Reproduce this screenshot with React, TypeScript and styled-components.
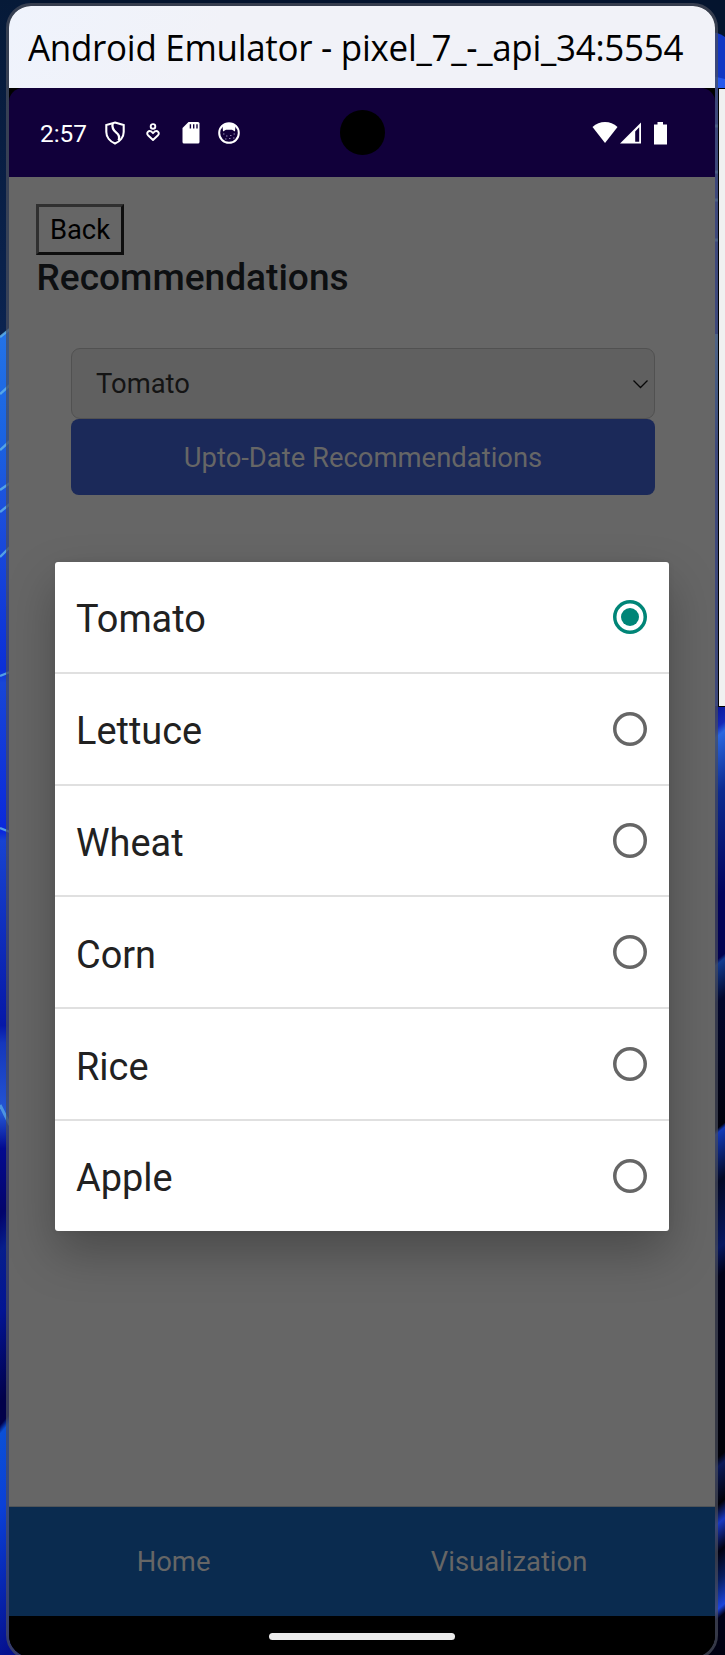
import React from "react";
import styled, { createGlobalStyle } from "styled-components";

const GlobalStyle = createGlobalStyle`
  *, *::before, *::after { box-sizing: border-box; }
  html, body { margin: 0; padding: 0; overflow: hidden; }
  body { font-family: Roboto, "Liberation Sans", sans-serif; }
`;

const Desktop = styled.div`
  position: relative;
  width: 725px;
  height: 1655px;
  overflow: hidden;
  padding: 3px 7px 0 6px;
  background: #04142e;
`;

const Wallpaper = styled.svg`
  position: absolute;
  inset: 0;
  width: 725px;
  height: 1655px;
`;

const BackWindow = styled.div`
  position: absolute;
  top: 88px;
  left: 718px;
  width: 20px;
  height: 619px;
  border: 1px solid #000;
  background: #f0f0f0;
`;

const Frame = styled.div`
  position: relative;
  width: 712px;
  height: 1657px;
  border: 3px solid rgba(74, 78, 92, 0.72);
  border-radius: 25px;
`;

const Screen = styled.div`
  display: flex;
  flex-direction: column;
  width: 706px;
  height: 1651px;
  overflow: hidden;
  border-radius: 22px;
  background: #000;
`;

const TitleBar = styled.header`
  display: flex;
  align-items: center;
  flex: 0 0 82px;
  padding: 0 0 0 19px;
  background: linear-gradient(115deg, #eff3fc 0%, #f1f2f8 30%, #f1f2f8 100%);
`;

const Title = styled.h1`
  margin: 0;
  color: #000;
  font: 400 36.5px/50px "Open Sans", "Noto Sans", sans-serif;
  white-space: nowrap;
  transform: scaleX(0.957);
  transform-origin: left center;
  letter-spacing: -0.28px;
`;

const StatusBar = styled.div`
  position: relative;
  display: flex;
  align-items: center;
  justify-content: space-between;
  flex: 0 0 89px;
  padding: 0 47px 0 31px;
  border-radius: 14px 14px 0 0;
  background: #11003a;
  color: #fff;
`;

const Clock = styled.span`
  width: 60px;
  font-size: 24.4px;
  line-height: 30px;
  padding-top: 2px;
`;

const StatusGroup = styled.div`
  display: flex;
  align-items: center;
`;

const Camera = styled.div`
  position: absolute;
  top: 22px;
  left: 331px;
  width: 44.5px;
  height: 44.5px;
  border-radius: 50%;
  background: #000;
`;

const Page = styled.main`
  display: flex;
  flex-direction: column;
  align-items: flex-start;
  flex: 0 0 1330px;
  padding: 27px 27px 0;
  border-bottom: 1px solid #505458;
  background: #666;
`;

const BackButton = styled.button`
  width: 88px;
  height: 51px;
  padding: 0;
  border: 3px solid;
  border-color: #303030 #0e0e0e #0e0e0e #303030;
  background: #666;
  color: #000;
  font: 400 27.4px/40px Roboto, sans-serif;
`;

const Heading = styled.h2`
  margin: 0;
  padding-left: 0.5px;
  color: #0d0f11;
  font-size: 37.1px;
  font-weight: 500;
  line-height: 45px;
`;

const Form = styled.div`
  display: flex;
  flex-direction: column;
  width: 584px;
  margin: 48px 0 0 35px;
`;

const SelectBox = styled.div`
  display: flex;
  align-items: center;
  justify-content: space-between;
  height: 71px;
  padding: 0 5px 0 24px;
  border: 1px solid #515151;
  border-radius: 9px;
  background: #606060;
  color: #141414;
  font-size: 27.4px;
`;

const SubmitButton = styled.button`
  height: 76px;
  padding: 1px 0 0;
  border: 0;
  border-radius: 8px;
  background: #1b2959;
  color: #666;
  font: 400 27.43px/40px Roboto, sans-serif;
`;

const Dialog = styled.div`
  position: absolute;
  top: 556px;
  left: 46px;
  width: 614px;
  border-radius: 3px;
  background: #fff;
  box-shadow: 0 22px 48px rgba(0, 0, 0, 0.27), 0 0 6px rgba(0, 0, 0, 0.06);
`;

const Option = styled.div`
  display: flex;
  align-items: center;
  justify-content: space-between;
  height: 111.8px;
  padding: 0 22px 0 21px;
  border-bottom: 2px solid #e0e0e0;
  color: #212121;
  font-size: 37.9px;
  &:last-child { height: 109.8px; border-bottom: 0; }
`;

const Radio = styled.span<{ $checked?: boolean }>`
  display: flex;
  align-items: center;
  justify-content: center;
  width: 34.4px;
  height: 34.4px;
  box-shadow: inset 0 0 0 3.5px ${(p) => (p.$checked ? "#008577" : "#666")};
  border-radius: 50%;
  &::after {
    content: "";
    width: 18px;
    height: 18px;
    border-radius: 50%;
    background: ${(p) => (p.$checked ? "#008577" : "transparent")};
  }
`;

const OptionLabel = styled.span`
  padding-top: 5px;
`;

const NavBar = styled.nav`
  display: flex;
  align-items: center;
  justify-content: space-around;
  flex: 0 0 109px;
  padding: 0 17.5px;
  background: #0a2b4f;
  color: #666;
  font-size: 27.4px;
`;

const GestureArea = styled.div`
  display: flex;
  justify-content: center;
  flex: 1;
  padding-top: 17px;
  background: #000;
`;

const Pill = styled.div`
  width: 186px;
  height: 7px;
  border-radius: 4px;
  background: #ebebeb;
`;

const leftStreaks = [
  [337, 329], [394, 385], [450, 441], [490, 483], [512, 504], [557, 547], [676, 672], [828, 832],
];

const options = ["Tomato", "Lettuce", "Wheat", "Corn", "Rice", "Apple"];

function WallpaperArt() {
  return (
    <Wallpaper viewBox="0 0 725 1655">
      <defs>
        <linearGradient id="left" x1="0" y1="331" x2="0" y2="1210" gradientUnits="userSpaceOnUse">
          <stop offset="0" stopColor="#2473e8" />
          <stop offset="0.12" stopColor="#1a63e2" />
          <stop offset="0.2" stopColor="#1c50dc" />
          <stop offset="0.385" stopColor="#0b2fd8" />
          <stop offset="0.4" stopColor="#1746d8" />
          <stop offset="0.57" stopColor="#0a28dc" />
          <stop offset="0.58" stopColor="#1743d2" />
          <stop offset="0.79" stopColor="#0618a8" />
          <stop offset="0.81" stopColor="#1537bd" />
          <stop offset="0.89" stopColor="#2456d4" />
          <stop offset="0.93" stopColor="#020a90" />
          <stop offset="1" stopColor="#02046c" />
        </linearGradient>
        <linearGradient id="leftLow" x1="0" y1="1210" x2="0" y2="1655" gradientUnits="userSpaceOnUse" gradientTransform="translate(0 6) skewY(-50)">
          <stop offset="0" stopColor="#02046c" />
          <stop offset="0.08" stopColor="#071e8c" />
          <stop offset="0.22" stopColor="#021494" />
          <stop offset="0.42" stopColor="#01004a" />
          <stop offset="0.47" stopColor="#01004a" />
          <stop offset="0.49" stopColor="#0b50d6" />
          <stop offset="0.66" stopColor="#0a40d8" />
          <stop offset="1" stopColor="#04108e" />
        </linearGradient>
        <linearGradient id="right" x1="0" y1="706" x2="0" y2="1655" gradientUnits="userSpaceOnUse" gradientTransform="translate(0 604) skewY(-40)">
          <stop offset="0" stopColor="#0a189c" />
          <stop offset="0.02" stopColor="#1428b8" />
          <stop offset="0.03" stopColor="#2a66e0" />
          <stop offset="0.09" stopColor="#0c2a90" />
          <stop offset="0.2" stopColor="#02025c" />
          <stop offset="0.265" stopColor="#020250" />
          <stop offset="0.27" stopColor="#123a90" />
          <stop offset="0.31" stopColor="#02062c" />
          <stop offset="0.443" stopColor="#00000c" />
          <stop offset="0.448" stopColor="#1238b8" />
          <stop offset="0.5" stopColor="#020724" />
          <stop offset="0.57" stopColor="#061660" />
          <stop offset="0.6" stopColor="#000018" />
          <stop offset="0.79" stopColor="#000008" />
          <stop offset="0.8" stopColor="#0a1858" />
          <stop offset="0.84" stopColor="#000008" />
          <stop offset="0.86" stopColor="#1838c0" />
          <stop offset="0.89" stopColor="#000010" />
          <stop offset="0.92" stopColor="#061d60" />
          <stop offset="0.95" stopColor="#1c44dc" />
          <stop offset="0.96" stopColor="#000018" />
          <stop offset="1" stopColor="#000010" />
        </linearGradient>
        <linearGradient id="leftTop" x1="0" y1="0" x2="0" y2="331" gradientUnits="userSpaceOnUse">
          <stop offset="0" stopColor="#061a38" />
          <stop offset="1" stopColor="#0b2350" />
        </linearGradient>
        <linearGradient id="edge" x1="0" y1="334" x2="0" y2="450" gradientUnits="userSpaceOnUse">
          <stop offset="0" stopColor="#5a9cf0" />
          <stop offset="0.5" stopColor="#2f6fe0" />
          <stop offset="1" stopColor="#1a38c8" />
        </linearGradient>
      </defs>
      <rect width="30" height="340" fill="url(#leftTop)" />
      <path d="M0 337L10 329V1210H0Z" fill="url(#left)" />
      <rect y="1210" width="30" height="445" fill="url(#leftLow)" />
      {leftStreaks.map(([from, to]) => (
        <path key={from} d={`M0 ${from}L10 ${to}`} stroke="#5fb0e8" strokeWidth="2.4" opacity="0.85" />
      ))}
      <path d="M0 1105L10 1125" stroke="#5fb0e8" strokeWidth="3" opacity="0.7" />
      <path d="M700 32Q718 31 725 37V90H700Z" fill="#1237c4" />
      <path d="M712 76L725 79V90H712Z" fill="#2659ec" />
      <rect x="700" y="88" width="25" height="620" fill="#1a38c8" />
      <path d="M712 200H720M712 240H720M712 126H720M712 172H720" stroke="#4c8cf0" strokeWidth="3" />
      <rect x="700" y="334" width="19" height="116" fill="url(#edge)" />
      <rect x="690" y="706" width="35" height="949" fill="url(#right)" />
    </Wallpaper>
  );
}

function ShieldIcon() {
  return (
    <svg width="20" height="24" viewBox="0 0 20 24" fill="none" stroke="#fff" strokeWidth="2.1">
      <path d="M10 1.5L18.7 4V11C18.7 16 15 20.5 10 22.5C5 20.5 1.3 16 1.3 11V4Z" />
      <path d="M7.6 2.5C6.6 7.5 8.6 9.6 11.3 11.6C14.2 13.7 15 15.8 13.6 19.5" strokeWidth="2.3" />
    </svg>
  );
}

function CareIcon() {
  return (
    <svg width="14" height="19" viewBox="0 0 14 19" fill="none" stroke="#fff" strokeWidth="1.9">
      <circle cx="7" cy="3.4" r="2.3" />
      <path d="M7 17L2 12.2C0 9.8 2.6 7 5.2 8.4L7 10.2L8.8 8.4C11.4 7 14 9.8 12 12.2Z" strokeLinejoin="round" />
    </svg>
  );
}

function SdCardIcon() {
  return (
    <svg width="18" height="22" viewBox="0 0 18 22">
      <path d="M6.5 0H16Q17.5 0 17.5 1.5V20Q17.5 21.5 16 21.5H2Q.5 21.5 .5 20V6Z" fill="#fff" />
      <path d="M8.4 2.3V6.5M11.7 2.3V6.5M15 2.3V6.5" stroke="#11003a" strokeWidth="1.4" />
    </svg>
  );
}

function CatIcon() {
  return (
    <svg width="22" height="22" viewBox="0 0 22 22">
      <circle cx="11" cy="11" r="9.8" fill="none" stroke="#fff" strokeWidth="2" />
      <path d="M4.5 3.5Q11 -1 17.5 3.5L17 9.5L14 7.8H8L5 9.5Z" fill="#fff" />
      <path d="M5 12H6.5M8 14H9.5M12 13.5H13.5M15.5 12H17M7 17H8.5M11 16.5H12.5M15 16H16.5" stroke="#8d82ac" strokeWidth="1" />
    </svg>
  );
}

function SystemIcons() {
  return (
    <svg width="76" height="26" viewBox="0 0 76 26" fill="#fff">
      <path d="M0.5 7Q6 2 13 2T25.5 7L13 23Z" />
      <path fillRule="evenodd" d="M49 2.5V23.5H28ZM43.2 11.5V21.8H47.2V7.3Z" />
      <path d="M65.5 2H71V4.5H75V24.5H62V4.5H65.5Z" />
    </svg>
  );
}

const StatusIcon = styled.span<{ $gap: number }>`
  display: flex;
  margin-left: ${(p) => p.$gap}px;
`;

const NavLink = styled.span`
  line-height: 40px;
`;

export default function App() {
  return (
    <Desktop>
      <GlobalStyle />
      <WallpaperArt />
      <BackWindow />
      <Frame>
        <Screen>
          <TitleBar>
            <Title>Android Emulator - pixel_7_-_api_34:5554</Title>
          </TitleBar>
          <StatusBar>
            <StatusGroup>
              <Clock>2:57</Clock>
              <StatusIcon $gap={5}><ShieldIcon /></StatusIcon>
              <StatusIcon $gap={21}><CareIcon /></StatusIcon>
              <StatusIcon $gap={22}><SdCardIcon /></StatusIcon>
              <StatusIcon $gap={18}><CatIcon /></StatusIcon>
            </StatusGroup>
            <Camera />
            <SystemIcons />
          </StatusBar>
          <Page>
            <BackButton>Back</BackButton>
            <Heading>Recommendations</Heading>
            <Form>
              <SelectBox>
                Tomato
                <svg width="17" height="10" viewBox="0 0 17 10" fill="none" stroke="#080808" strokeWidth="1.3">
                  <path d="M1.5 1.5L8.5 8.5L15.5 1.5" />
                </svg>
              </SelectBox>
              <SubmitButton>Upto-Date Recommendations</SubmitButton>
            </Form>
          </Page>
          <NavBar>
            <NavLink>Home</NavLink>
            <NavLink>Visualization</NavLink>
          </NavBar>
          <GestureArea>
            <Pill />
          </GestureArea>
        </Screen>
        <Dialog>
          {options.map((name, i) => (
            <Option key={name}>
              <OptionLabel>{name}</OptionLabel>
              <Radio $checked={i === 0} />
            </Option>
          ))}
        </Dialog>
      </Frame>
    </Desktop>
  );
}
